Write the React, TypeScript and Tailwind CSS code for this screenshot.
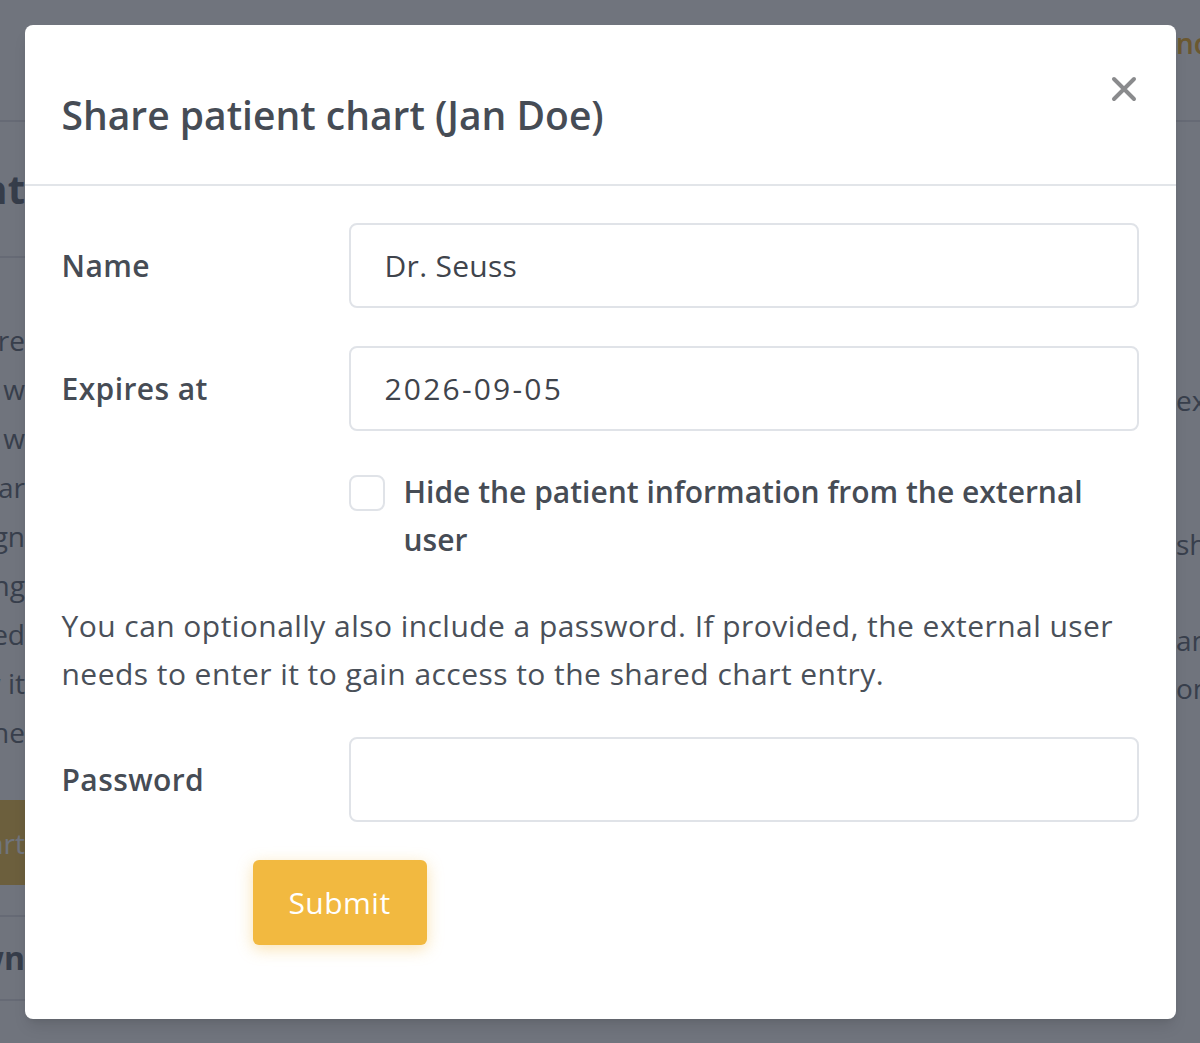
import { useState } from "react";

const FONT = { fontFamily: '"Open Sans", "Noto Sans", sans-serif' };

function BackgroundPage() {
  const leftLines = ["Share", "is shared w", "to who w", "chart ar", "design", "upcoming", "protected", "view it", "the"];
  const rightLines = ["expected", "\u00a0", "\u00a0", "shown er", "\u00a0", "and", "on t"];

  return (
    <div className="min-h-[1043px] bg-white text-[#737a85]">
      {/* nav */}
      <div className="h-[122px] bg-white border-b-2 border-[#e5e7eb] flex justify-end items-start">
        <div className="w-[24px] overflow-hidden flex justify-start pt-[22px]">
          <span className="whitespace-nowrap text-[28px] text-[#f2b940] font-semibold">nce</span>
        </div>
      </div>

      <div className="flex justify-between">
        {/* left strip */}
        <div className="w-[25px] overflow-hidden flex flex-col items-end">
          <div className="h-[136px] w-full border-b-2 border-[#e5e7eb] flex items-center justify-end">
            <span className="whitespace-nowrap text-[40px] font-bold text-[#6f7681]">Patient</span>
          </div>
          <div className="flex flex-col items-end pt-[58px]">
            {leftLines.map((l, i) => (
              <span key={i} className="block whitespace-nowrap text-[28px] leading-[49px]">{l}</span>
            ))}
          </div>
          <div className="mt-[43px] h-[85px] bg-[#f5cb60] flex items-center justify-end rounded-l">
            <span className="whitespace-nowrap text-[28px] text-white">Start</span>
          </div>
          <div className="mt-[30px] h-[86px] w-full border-t-2 border-b-2 border-[#e5e7eb] flex items-center justify-end">
            <span className="whitespace-nowrap text-[32px] font-bold text-[#6f7681]">Shown</span>
          </div>
        </div>

        {/* right strip */}
        <div className="w-[24px] overflow-hidden flex flex-col items-start pt-[254px]">
          {rightLines.map((l, i) => (
            <span key={i} className="block whitespace-nowrap text-[28px] leading-[48px]">{l}</span>
          ))}
        </div>
      </div>
    </div>
  );
}

function CloseIcon() {
  return (
    <svg width="26" height="26" viewBox="0 0 26 26" fill="none">
      <path d="M3 3L23 23M23 3L3 23" stroke="#8a8b8d" strokeWidth="4" strokeLinecap="round" />
    </svg>
  );
}

function FieldRow({
  label,
  value,
  onChange,
  type = "text",
  inputClass = "tracking-[0.3px]",
}: {
  label: string;
  value: string;
  onChange: (v: string) => void;
  type?: string;
  inputClass?: string;
}) {
  return (
    <div className="flex items-center">
      <label className="w-[287px] shrink-0 text-[30px] font-semibold tracking-[0.4px] text-[#464c55]">{label}</label>
      <input
        type={type}
        value={value}
        onChange={e => onChange(e.target.value)}
        className={`flex-1 h-[85px] border-2 border-[#e0e3e8] rounded-[8px] px-[34px] text-[30px] text-[#3f444c] outline-none bg-white ${inputClass}`}
        style={FONT}
      />
    </div>
  );
}

export default function App() {
  const [name, setName] = useState("Dr. Seuss");
  const [expires, setExpires] = useState("2026-09-05");
  const [password, setPassword] = useState("");
  const [hidePatient, setHidePatient] = useState(false);

  return (
    <div className="relative w-[1200px] h-[1043px] overflow-hidden" style={FONT}>
      <BackgroundPage />

      {/* overlay */}
      <div className="absolute inset-0 bg-[#111827]/60" />

      {/* modal */}
      <div className="absolute inset-0 flex justify-center pt-[25px]">
        <div className="w-[1151px] h-fit bg-white rounded-[8px] shadow-lg">
          <div className="flex items-start justify-between pl-[37px] pr-[39px] pt-[51px] pb-[39px] border-b-2 border-[#e2e5e9]">
            <h2 className="mt-[9px] text-[39px] leading-[60px] font-semibold text-[#464c55]">
              Share patient chart (Jan Doe)
            </h2>
            <button className="w-[26px] h-[26px]" aria-label="Close">
              <CloseIcon />
            </button>
          </div>

          <div className="px-[37px] pt-[37px] pb-[74px] flex flex-col">
            <FieldRow label="Name" value={name} onChange={setName} />
            <div className="mt-[38px]">
              <FieldRow label="Expires at" value={expires} onChange={setExpires} inputClass="tracking-[2.2px]" />
            </div>

            <label className="mt-[37px] flex items-start pl-[287px] cursor-pointer">
              <input
                type="checkbox"
                checked={hidePatient}
                onChange={e => setHidePatient(e.target.checked)}
                className="appearance-none mt-[7px] w-[36px] h-[36px] shrink-0 border-2 border-[#e0e3e8] rounded-[8px] bg-white checked:bg-[#f2b940] checked:border-[#f2b940]"
              />
              <span className="ml-[19px] text-[30px] leading-[48px] font-semibold text-[#464c55]">
                Hide the patient information from the external user
              </span>
            </label>

            <p className="mt-[38px] text-[30px] leading-[48px] tracking-[0.45px] text-[#4a5059]">
              You can optionally also include a password. If provided, the external user needs to enter it to gain
              access to the shared chart entry.
            </p>

            <div className="mt-[39px]">
              <FieldRow label="Password" value={password} onChange={setPassword} type="password" />
            </div>

            <div className="mt-[38px] pl-[191px]">
              <button className="w-[174px] h-[85px] rounded-[6px] bg-[#f2b940] text-white text-[30px] tracking-[0.5px] shadow-[0_4px_16px_rgba(242,185,64,0.4)]">
                Submit
              </button>
            </div>
          </div>
        </div>
      </div>
    </div>
  );
}
